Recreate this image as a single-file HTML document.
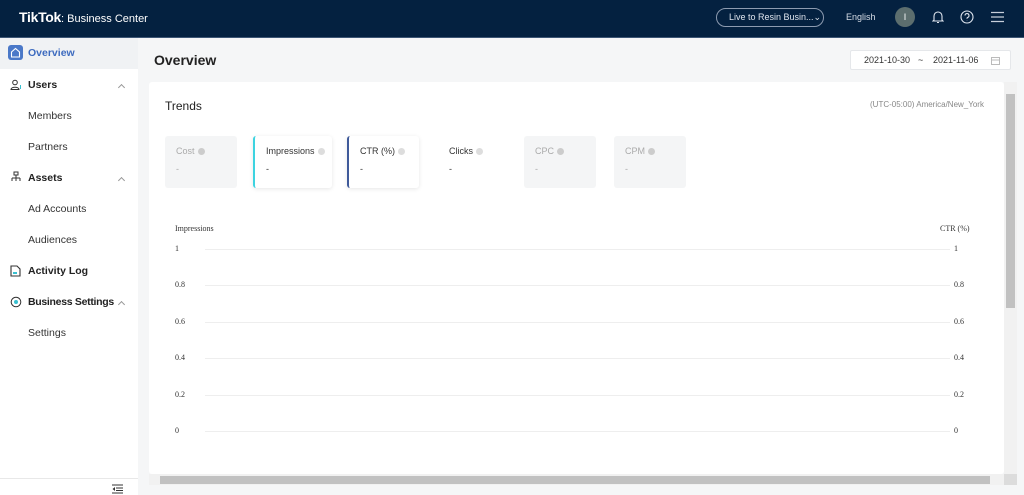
<!DOCTYPE html>
<html><head><meta charset="utf-8"><style>
*{margin:0;padding:0;box-sizing:border-box}
body{width:1024px;height:495px;overflow:hidden;background:#f5f6f7;font-family:"Liberation Sans",sans-serif;position:relative;color:#222}
.hd{position:absolute;left:0;top:0;width:1024px;height:38px;background:#042140;border-bottom:1px solid #3d5675}
.abs{position:absolute}
.sb{position:absolute;left:0;top:38px;width:138px;height:457px;background:#fff}
.nav{position:absolute;left:28px;font-size:10.5px;color:#333}
.b{font-weight:bold;color:#222}
.chev{position:absolute;left:119px;width:5px;height:5px;border-left:1px solid #999;border-top:1px solid #999;transform:rotate(45deg)}
.card{position:absolute;left:149px;top:82px;width:855px;height:392px;background:#fff;border-radius:3px}
.m{position:absolute;top:54px;width:72px;height:52px;border-radius:3px;font-size:9px;color:#333}
.m .t{position:absolute;left:11px;top:10px}
.m .d{position:absolute;left:11px;top:28px}
.q{display:inline-block;width:7px;height:7px;border-radius:50%;background:#ccc;margin-left:3px;vertical-align:-1px}
.gl{position:absolute;left:56px;width:745px;height:1px;background:#eee}
.yl{position:absolute;left:26px;font-family:"Liberation Serif",serif;font-size:8px;color:#333}
.yr{position:absolute;left:805px;font-family:"Liberation Serif",serif;font-size:8px;color:#333}
</style></head><body>
<div class="hd">
 <div class="abs" style="left:19px;top:9px;color:#fff;font-weight:bold;font-size:14px;letter-spacing:-0.3px">TikTok<span style="font-weight:normal;font-size:11px;letter-spacing:0">: Business Center</span></div>
 <div class="abs" style="left:716px;top:8px;width:108px;height:19px;border:1px solid #8d9bb0;border-radius:10px;color:#dfe5ee;font-size:9px;line-height:17px;padding-left:12px">Live to Resin Busin...⌄</div>
 <div class="abs" style="left:846px;top:12px;color:#d7dde6;font-size:9px">English</div>
 <div class="abs" style="left:895px;top:7px;width:20px;height:20px;border-radius:50%;background:#5c6e6e;color:#fff;font-size:9px;text-align:center;line-height:20px">I</div>
 <svg class="abs" style="left:932px;top:10px" width="12" height="14" viewBox="0 0 12 14"><path d="M2 10V6a4 4 0 0 1 8 0v4l1 1H1z M5 12.5h2" fill="none" stroke="#dfe5ee" stroke-width="1.1"/></svg>
 <svg class="abs" style="left:960px;top:10px" width="14" height="14" viewBox="0 0 14 14"><circle cx="7" cy="7" r="6" fill="none" stroke="#dfe5ee" stroke-width="1.1"/><path d="M5 5.5a2 2 0 1 1 2.5 2c-.5.2-.5.6-.5 1.2M7 10.2v.3" fill="none" stroke="#dfe5ee" stroke-width="1.1"/></svg>
 <svg class="abs" style="left:991px;top:11px" width="13" height="12"><path d="M0 1.5h13M0 6h13M0 10.5h13" stroke="#c7cfda" stroke-width="1.2"/></svg>
</div>
<div class="sb">
 <div class="abs" style="left:0;top:0;width:138px;height:31px;background:#f0f2f4"></div>
 <div class="abs" style="left:8px;top:7px;width:15px;height:15px;border-radius:3px;background:#4a78c8"></div>
 <svg class="abs" style="left:10px;top:9px" width="11" height="11"><path d="M1.5 5L5.5 1.5 9.5 5V10H1.5Z" fill="none" stroke="#fff" stroke-width="1.1"/></svg>
 <div class="nav b" style="top:9px;color:#3d6bbf">Overview</div>
 <svg class="abs" style="left:10px;top:41px" width="12" height="12"><circle cx="5" cy="3.5" r="2.3" fill="none" stroke="#333"/><path d="M1 10.5c0-3 8-3 8 0z" fill="none" stroke="#333"/><path d="M10.5 6v4" stroke="#38c0d0"/></svg>
 <div class="nav b" style="top:41px">Users</div><div class="chev" style="top:47px"></div>
 <div class="nav" style="top:72px">Members</div>
 <div class="nav" style="top:103px">Partners</div>
 <svg class="abs" style="left:10px;top:133px" width="12" height="12"><rect x="4" y="1" width="4" height="3" fill="none" stroke="#333"/><path d="M6 4v3M2 7h8M2 7v3M10 7v3M6 7v3" stroke="#333"/></svg>
 <div class="nav b" style="top:134px">Assets</div><div class="chev" style="top:140px"></div>
 <div class="nav" style="top:165px">Ad Accounts</div>
 <div class="nav" style="top:196px">Audiences</div>
 <svg class="abs" style="left:10px;top:227px" width="11" height="12"><path d="M1 1h6l3 3v7H1z" fill="none" stroke="#333" stroke-width="1.1"/><rect x="3" y="7" width="4" height="2" fill="#38c0d0"/></svg>
 <div class="nav b" style="top:227px">Activity Log</div>
 <svg class="abs" style="left:10px;top:258px" width="12" height="12"><circle cx="6" cy="6" r="4.8" fill="none" stroke="#333"/><circle cx="6" cy="6" r="2" fill="#38c0d0"/></svg>
 <div class="nav b" style="top:258px;letter-spacing:-0.3px">Business Settings</div><div class="chev" style="top:264px"></div>
 <div class="nav" style="top:289px">Settings</div>
 <div class="abs" style="left:0;top:440px;width:138px;height:1px;background:#e8e8e8"></div>
 <svg class="abs" style="left:112px;top:446px" width="11" height="10"><path d="M0 1h11M4 4h7M4 6.5h7M0 9h11" stroke="#333"/><path d="M3 3L0.5 5 3 7z" fill="#333"/></svg>
</div>
<div class="abs" style="left:154px;top:52px;font-size:14px;font-weight:bold;color:#222">Overview</div>
<div class="abs" style="left:850px;top:50px;width:161px;height:20px;background:#fff;border:1px solid #e5e7ea;border-radius:2px;font-size:9px;color:#333;line-height:18px">
 <span class="abs" style="left:13px">2021-10-30</span><span class="abs" style="left:67px">~</span><span class="abs" style="left:82px">2021-11-06</span>
 <svg class="abs" style="left:140px;top:5px" width="9" height="9"><rect x=".5" y="1.5" width="8" height="7" fill="none" stroke="#bbb"/><path d="M.5 4h8" stroke="#bbb"/></svg>
</div>
<div class="card">
 <div class="abs" style="left:16px;top:17px;font-size:12px;color:#222">Trends</div>
 <div class="abs" style="left:721px;top:18px;font-size:8px;color:#888">(UTC-05:00) America/New_York</div>
 <div class="m" style="left:16px;background:#f4f5f6;color:#aaa"><span class="t">Cost<i class="q"></i></span><span class="d">-</span></div>
 <div class="m" style="left:104px;width:79px;border-left:2px solid #3dd3e0;box-shadow:0 1px 4px rgba(0,0,0,.1)"><span class="t">Impressions<i class="q" style="background:#ddd"></i></span><span class="d">-</span></div>
 <div class="m" style="left:198px;border-left:2px solid #3f5a9a;box-shadow:0 1px 4px rgba(0,0,0,.1)"><span class="t">CTR (%)<i class="q" style="background:#ddd"></i></span><span class="d">-</span></div>
 <div class="m" style="left:289px"><span class="t">Clicks<i class="q" style="background:#ddd"></i></span><span class="d">-</span></div>
 <div class="m" style="left:375px;background:#f4f5f6;color:#aaa"><span class="t">CPC<i class="q"></i></span><span class="d">-</span></div>
 <div class="m" style="left:465px;background:#f4f5f6;color:#aaa"><span class="t">CPM<i class="q"></i></span><span class="d">-</span></div>
 <div class="yl" style="top:142px">Impressions</div>
 <div class="yr" style="left:791px;top:142px">CTR (%)</div>
 <div class="yl" style="top:162px">1</div><div class="yr" style="top:162px">1</div><div class="gl" style="top:167px"></div>
 <div class="yl" style="top:198px">0.8</div><div class="yr" style="top:198px">0.8</div><div class="gl" style="top:203px"></div>
 <div class="yl" style="top:235px">0.6</div><div class="yr" style="top:235px">0.6</div><div class="gl" style="top:240px"></div>
 <div class="yl" style="top:271px">0.4</div><div class="yr" style="top:271px">0.4</div><div class="gl" style="top:276px"></div>
 <div class="yl" style="top:308px">0.2</div><div class="yr" style="top:308px">0.2</div><div class="gl" style="top:313px"></div>
 <div class="yl" style="top:344px">0</div><div class="yr" style="top:344px">0</div><div class="gl" style="top:349px"></div>
</div>
<div class="abs" style="left:1004px;top:82px;width:13px;height:392px;background:#f1f1f1"></div>
<div class="abs" style="left:1006px;top:94px;width:9px;height:214px;background:#c1c1c1"></div>
<div class="abs" style="left:149px;top:474px;width:855px;height:11px;background:#f1f1f1"></div>
<div class="abs" style="left:160px;top:476px;width:830px;height:8px;background:#c1c1c1"></div>
<div class="abs" style="left:1004px;top:474px;width:13px;height:11px;background:#dcdcdc"></div>
</body></html>
